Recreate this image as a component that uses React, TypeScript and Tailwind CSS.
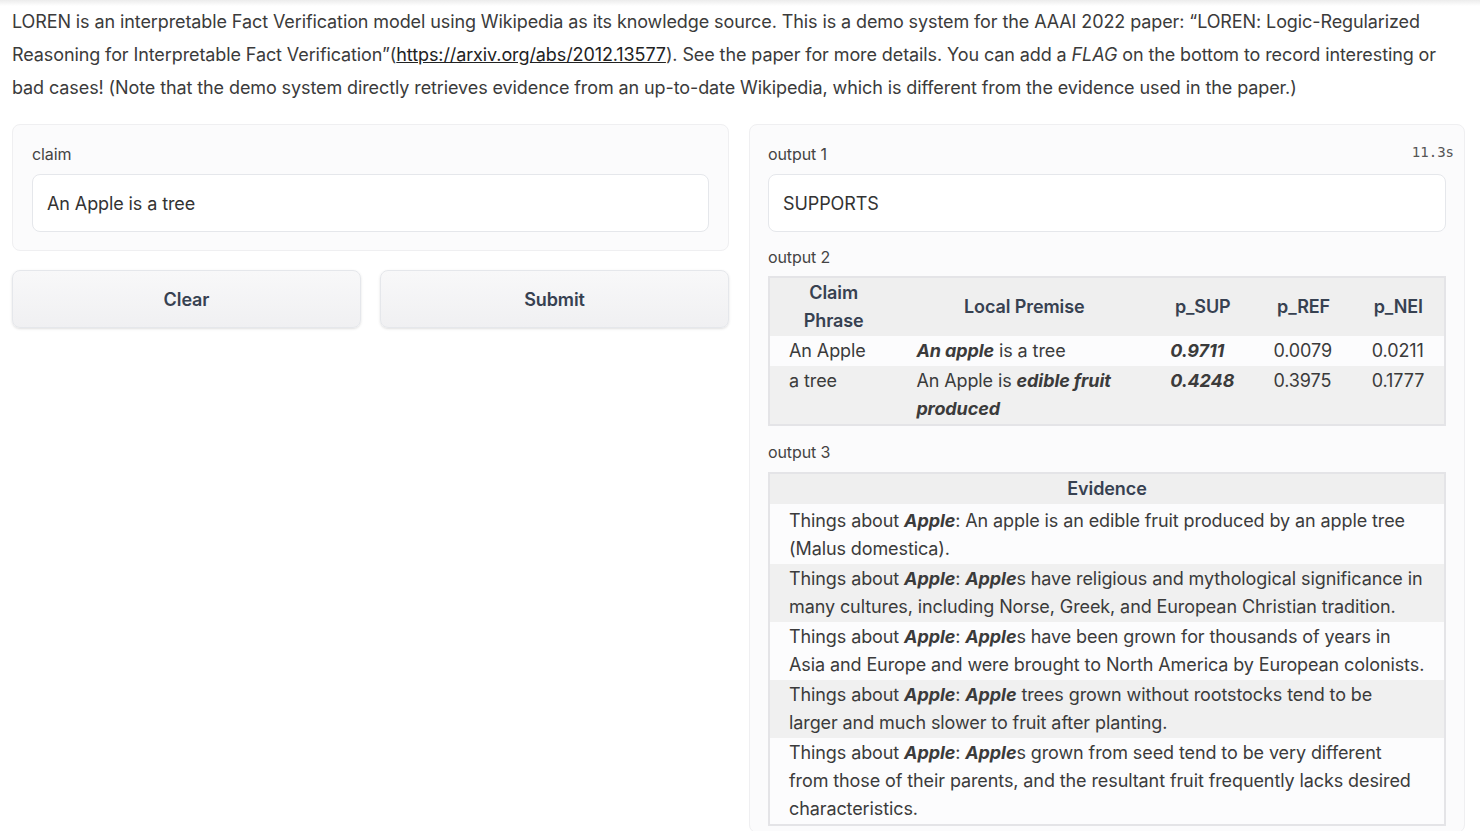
import React from "react";

const font = { fontFamily: "Inter, 'Noto Sans', Arial, sans-serif" };

function B({ children }: { children: React.ReactNode }) {
  return <b className="font-bold italic">{children}</b>;
}

const evidence: React.ReactNode[] = [
  <>Things about <B>Apple</B>: An apple is an edible fruit produced by an apple tree<br />(Malus domestica).</>,
  <>Things about <B>Apple</B>: <B>Apple</B>s have religious and mythological significance in<br />many cultures, including Norse, Greek, and European Christian tradition.</>,
  <>Things about <B>Apple</B>: <B>Apple</B>s have been grown for thousands of years in<br />Asia and Europe and were brought to North America by European colonists.</>,
  <>Things about <B>Apple</B>: <B>Apple</B> trees grown without rootstocks tend to be<br />larger and much slower to fruit after planting.</>,
  <>Things about <B>Apple</B>: <B>Apple</B>s grown from seed tend to be very different<br />from those of their parents, and the resultant fruit frequently lacks desired<br />characteristics.</>,
];

export default function App() {
  return (
    <div className="min-h-[831px] w-[1480px] bg-white text-[#3b3b3b] text-[18px] tracking-[-0.1px] overflow-hidden" style={font}>
      <div className="h-[6px] bg-gradient-to-b from-[#ececec] to-white" />
      <p className="pl-3 pr-[20px] leading-[33px] -mt-[1px]">
        LOREN is an interpretable Fact Verification model using Wikipedia as its knowledge source. This is a demo system for the AAAI 2022 paper: “LOREN: Logic-Regularized Reasoning for Interpretable Fact Verification”(
        <a className="underline text-[#222]">https://arxiv.org/abs/2012.13577</a>). See the paper for more details. You can add a <i>FLAG</i> on the bottom to record interesting or bad cases! (Note that the demo system directly retrieves evidence from an up-to-date Wikipedia, which is different from the evidence used in the paper.)
      </p>

      <div className="flex gap-[20px] pl-3 pr-[15px] mt-[20px] items-start">
        {/* left column */}
        <div className="w-[717px] flex flex-col gap-[19px]">
          <div className="rounded-[8px] border border-[#efeff1] bg-[#fbfbfc] px-[19px] pt-[19px] pb-[18px]">
            <div className="text-[16px] leading-[20px] text-[#444] mb-[10px]">claim</div>
            <div className="h-[58px] rounded-[8px] border border-[#e5e7eb] bg-white flex items-center px-[14px] text-[18px] text-[#333]">
              An Apple is a tree
            </div>
          </div>
          <div className="flex gap-[19px]">
            <button className="flex-1 h-[58px] rounded-[8px] border border-[#e5e7eb] bg-gradient-to-b from-[#f8f8f9] to-[#f0f0f2] font-semibold text-[18px] text-[#374151] shadow-sm">
              Clear
            </button>
            <button className="flex-1 h-[58px] rounded-[8px] border border-[#e5e7eb] bg-gradient-to-b from-[#f8f8f9] to-[#f0f0f2] font-semibold text-[18px] text-[#374151] shadow-sm">
              Submit
            </button>
          </div>
        </div>

        {/* right column */}
        <div className="relative w-[716px] rounded-[8px] border border-[#efeff1] bg-[#fbfbfc] px-[18px] pt-[19px] pb-[6px]">
          <div
            className="absolute right-[10px] top-[19px] text-[14px] leading-[16px] text-[#555] tracking-normal"
            style={{ fontFamily: "'DejaVu Sans Mono', 'Liberation Mono', monospace" }}
          >
            11.3s
          </div>
          <div className="text-[16px] leading-[20px] text-[#444] mb-[10px]">output 1</div>
          <div className="h-[58px] rounded-[8px] border border-[#e5e7eb] bg-white flex items-center px-[14px] text-[18px] text-[#333]">
            SUPPORTS
          </div>

          <div className="text-[16px] leading-[20px] text-[#444] mt-[15px] mb-[9px]">output 2</div>
          <table className="w-[678px] border-2 border-[#e4e4e7] border-collapse table-fixed text-[18px] leading-[28px]">
            <colgroup>
              <col className="w-[128px]" />
              <col className="w-[253px]" />
              <col className="w-[103px]" />
              <col className="w-[98px]" />
              <col className="w-[92px]" />
            </colgroup>
            <thead>
              <tr className="bg-[#efefef] text-[#374151]">
                <th className="font-semibold px-[19px] py-[1px] text-center">Claim Phrase</th>
                <th className="font-semibold px-[19px] py-[1px] text-center">Local Premise</th>
                <th className="font-semibold px-[8px] py-[1px] text-center">p_SUP</th>
                <th className="font-semibold px-[8px] py-[1px] text-center">p_REF</th>
                <th className="font-semibold px-[8px] py-[1px] text-center">p_NEI</th>
              </tr>
            </thead>
            <tbody>
              <tr className="bg-[#fcfcfd] align-top">
                <td className="pl-[19px] pr-2 py-[1px]">An Apple</td>
                <td className="pl-[19px] pr-2 py-[1px]"><B>An apple</B> is a tree</td>
                <td className="pl-[19px] pr-1 py-[1px]"><B>0.9711</B></td>
                <td className="pl-[19px] pr-1 py-[1px]">0.0079</td>
                <td className="pl-[19px] pr-1 py-[1px]">0.0211</td>
              </tr>
              <tr className="bg-[#f0f0f0] align-top">
                <td className="pl-[19px] pr-2 py-[1px]">a tree</td>
                <td className="pl-[19px] pr-2 py-[1px]">An Apple is <B>edible fruit produced</B></td>
                <td className="pl-[19px] pr-1 py-[1px]"><B>0.4248</B></td>
                <td className="pl-[19px] pr-1 py-[1px]">0.3975</td>
                <td className="pl-[19px] pr-1 py-[1px]">0.1777</td>
              </tr>
            </tbody>
          </table>

          <div className="text-[16px] leading-[20px] text-[#444] mt-[16px] mb-[10px]">output 3</div>
          <table className="w-[678px] border-2 border-[#e4e4e7] border-collapse text-[18px] leading-[28px]">
            <thead>
              <tr className="bg-[#efefef] text-[#374151]">
                <th className="font-semibold py-[1px] text-center">Evidence</th>
              </tr>
            </thead>
            <tbody>
              {evidence.map((e, i) => (
                <tr key={i} className={i % 2 === 0 ? "bg-[#fcfcfd]" : "bg-[#f0f0f0]"}>
                  <td className={i === 0 ? "pl-[19px] pr-[4px] pt-[3px] pb-[1px] whitespace-nowrap" : "pl-[19px] pr-[4px] py-[1px] whitespace-nowrap"}>{e}</td>
                </tr>
              ))}
            </tbody>
          </table>
        </div>
      </div>
    </div>
  );
}
